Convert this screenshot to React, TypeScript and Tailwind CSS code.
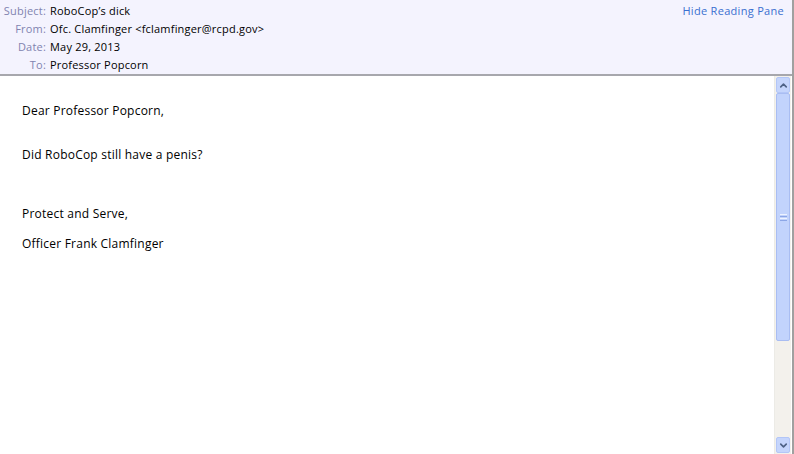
import { ChevronUp, ChevronDown } from 'lucide-react'

const rows = [
  { label: 'Subject:', value: 'RoboCop’s dick' },
  { label: 'From:', value: 'Ofc. Clamfinger <fclamfinger@rcpd.gov>' },
  { label: 'Date:', value: 'May 29, 2013' },
  { label: 'To:', value: 'Professor Popcorn' },
]

export default function App() {
  return (
    <div
      className="w-[794px] h-[454px] flex flex-col bg-white overflow-hidden border-r-2 border-[#a0a0a0]"
      style={{ fontFamily: '"Open Sans", "Noto Sans", sans-serif' }}
    >
      <div className="h-[76px] shrink-0 bg-[#f4f3fe] border-b-2 border-[#a7a7ad] flex justify-between pt-[1px]">
        <div className="flex flex-col">
          {rows.map((r) => (
            <div key={r.label} className="flex h-[18px] items-center text-[11px] leading-none tracking-[0.2px]">
              <span className="w-[46px] text-right text-[#8183b0]">{r.label}</span>
              <span className="pl-[4px] text-black">{r.value}</span>
            </div>
          ))}
        </div>
        <div className="text-[11px] text-[#3a6fd0] pr-[8px] pt-[2px] tracking-[0.3px]">Hide Reading Pane</div>
      </div>
      <div className="flex flex-1 min-h-0">
        <div className="flex-1 pl-[22px] pt-[26px] text-[12px] text-black tracking-[0.22px]">
          <p className="h-[44px] leading-[18px]">Dear Professor Popcorn,</p>
          <p className="h-[59px] leading-[18px]">Did RoboCop still have a penis?</p>
          <p className="h-[30px] leading-[18px]">Protect and Serve,</p>
          <p className="leading-[18px]">Officer Frank Clamfinger</p>
        </div>
        <div className="w-[17px] flex flex-col bg-[#f3f1ec] border-l border-[#ecebe6] py-[1px] mr-[1px]">
          <div className="h-[16px] mx-[1px] rounded-[2px] bg-[#c5d5fc] border border-[#b3c6f7] flex items-center justify-center">
            <ChevronUp size={11} strokeWidth={3.5} className="text-[#4d6185]" />
          </div>
          <div className="h-[248px] mx-[1px] rounded-[2px] bg-[#c2d3fc] border border-[#a9bdf2] flex items-center justify-center">
            <div className="flex flex-col gap-[1px]">
              <div className="w-[7px] h-[1px] bg-[#eef3ff]" />
              <div className="w-[7px] h-[1px] bg-[#8ca6e6]" />
              <div className="w-[7px] h-[1px] bg-[#eef3ff]" />
              <div className="w-[7px] h-[1px] bg-[#8ca6e6]" />
            </div>
          </div>
          <div className="flex-1" />
          <div className="h-[16px] mx-[1px] rounded-[2px] bg-[#c5d5fc] border border-[#b3c6f7] flex items-center justify-center">
            <ChevronDown size={11} strokeWidth={3.5} className="text-[#4d6185]" />
          </div>
        </div>
      </div>
    </div>
  )
}
